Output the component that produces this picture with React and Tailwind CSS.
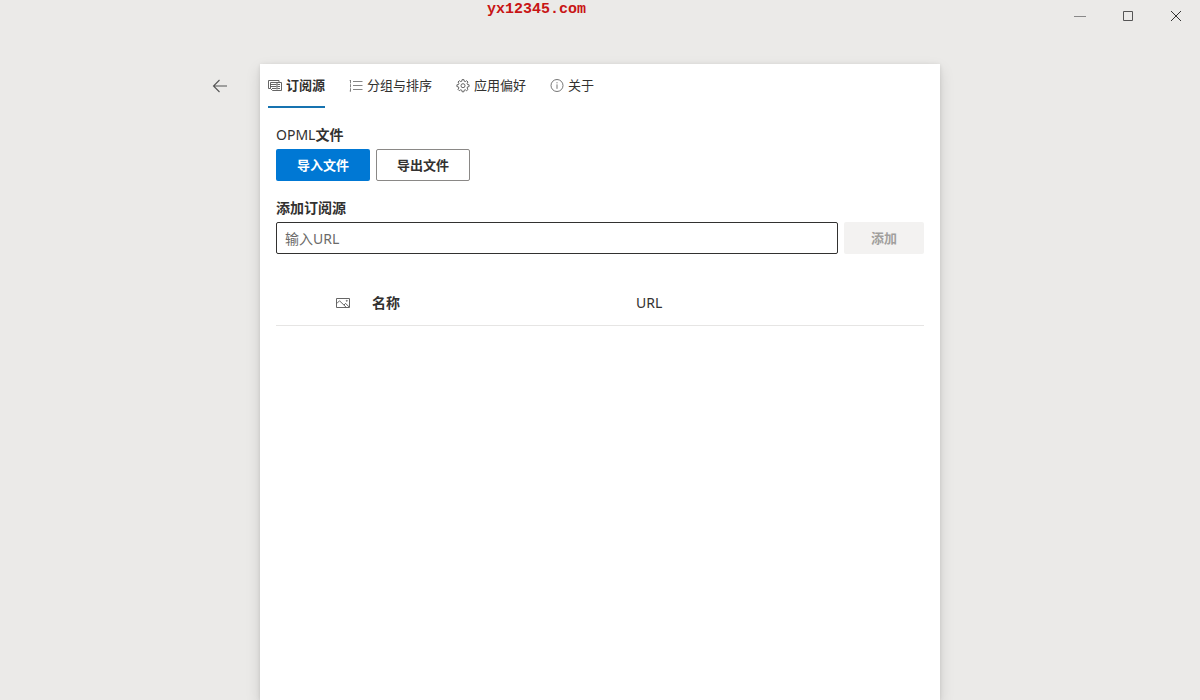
import React, { useState } from "react";

function ArrowLeftIcon() {
  return (
    <svg width="16" height="16" viewBox="0 0 16 16" fill="none" stroke="#555" strokeWidth="1.1" aria-hidden="true">
      <path d="M15 8H1.5M7.5 2L1.5 8l6 6" />
    </svg>
  );
}

function SourceIcon() {
  return (
    <svg width="14" height="14" viewBox="0 0 14 14" fill="none" stroke="#555" strokeWidth="0.9" aria-hidden="true">
      <path d="M2.5 9.5h-2v-8h10.5v2" />
      <path d="M2.5 3.5h11v8h-9l-2-2" />
      <path d="M2.5 3.5v6M2.5 5.5h6M2.5 7.5h6M4 9.5h4.5M9.5 5.5h2.5M9.5 7.5h2.5M9.5 9.5h2.5M9 3.5v7" />
    </svg>
  );
}

function GroupIcon() {
  return (
    <svg width="14" height="14" viewBox="0 0 14 14" fill="none" stroke="#777" strokeWidth="0.9" aria-hidden="true">
      <path d="M1.5 1v3.4M1.5 5.2v3.2M1.5 9.2v3.3M.7 1.5h.8M.7 12h1.2" />
      <path d="M4 2.5h9.5M4 6.5h9.5M4 10.5h9.5" />
    </svg>
  );
}

function SettingsIcon() {
  return (
    <svg width="14" height="14" viewBox="0 0 14 14" fill="none" stroke="#555" strokeWidth="0.9" strokeLinejoin="round" aria-hidden="true">
      <path d="M6.1 .6h1.8l.3 1.6 1.1.4 1.4-.9 1.3 1.3-.9 1.4.4 1.1 1.6.3v1.8l-1.6.3-.4 1.1.9 1.4-1.3 1.3-1.4-.9-1.1.4-.3 1.6H6.1l-.3-1.6-1.1-.4-1.4.9L2 10.4 2.9 9l-.4-1.1L.9 7.6V5.8l1.6-.3.4-1.1L2 3l1.3-1.3 1.4.9 1.1-.4z" />
      <circle cx="7" cy="6.7" r="2" />
    </svg>
  );
}

function InfoIcon() {
  return (
    <svg width="14" height="14" viewBox="0 0 14 14" fill="none" stroke="#666" strokeWidth="0.9" aria-hidden="true">
      <circle cx="7" cy="6.5" r="6" />
      <path d="M7 5.4v4.4M7 3.2v1.1" />
    </svg>
  );
}

function PictureIcon() {
  return (
    <svg width="14" height="14" viewBox="0 0 14 14" fill="none" stroke="#555" strokeWidth="0.9" role="img" aria-label="图标">
      <path d="M.5 2.5h13v9H.5z" />
      <path d="M.8 7.5L3.5 4.8l6.6 6.4M8 9l1.6-1.6 3.6 3.6" />
      <circle cx="10.8" cy="4.8" r=".5" />
    </svg>
  );
}

const tabs = [
  { name: "订阅源", Icon: SourceIcon },
  { name: "分组与排序", Icon: GroupIcon },
  { name: "应用偏好", Icon: SettingsIcon },
  { name: "关于", Icon: InfoIcon },
];

const windowControls = [
  { name: "最小化", path: "M0 6.5h12", color: "#888" },
  { name: "最大化", path: "M1.5 1.5h9v9h-9z", color: "#555" },
  { name: "关闭", path: "M1 1l10 10M11 1L1 11", color: "#333" },
];

export default function App() {
  const [active, setActive] = useState("订阅源");
  const [url, setUrl] = useState("");

  return (
    <div className="relative flex min-h-screen flex-col bg-[#ebeae8] font-['Noto_Sans','Noto_Sans_CJK_SC',sans-serif] text-[#323130]">
      <header className="flex h-8 justify-end">
        {windowControls.map((c) => (
          <button key={c.name} type="button" aria-label={c.name} className="flex w-12 items-center justify-center">
            <svg width="12" height="12" viewBox="0 0 12 12" fill="none" stroke={c.color} overflow="visible" aria-hidden="true">
              <path d={c.path} />
            </svg>
          </button>
        ))}
      </header>
      <span className="absolute top-0 left-[487px] font-['Liberation_Mono',monospace] text-[15px] leading-5 font-bold text-[#c81414]">
        yx12345.com
      </span>

      <div className="grid flex-1 grid-cols-[1fr_minmax(0,680px)_1fr] pt-8">
        <div className="flex items-start justify-end pr-5">
          <button type="button" aria-label="返回" className="flex h-11 w-10 items-center justify-center">
            <ArrowLeftIcon />
          </button>
        </div>

        <main className="bg-white shadow-[0_6px_14px_rgba(0,0,0,0.13),0_1px_4px_rgba(0,0,0,0.1)]">
          <nav className="flex h-11 gap-6 px-2">
            {tabs.map(({ name, Icon }) => (
              <button
                key={name}
                type="button"
                onClick={() => setActive(name)}
                className={
                  active === name
                    ? "flex items-center gap-1 border-b-2 border-[#1673b0] pt-0.5 text-[13px] font-semibold"
                    : "flex items-center gap-1 border-b-2 border-transparent pt-0.5 text-[13px]"
                }
              >
                <Icon />
                <span>{name}</span>
              </button>
            ))}
          </nav>

          <div className="px-4 pt-[13px]">
            <h2 className="py-1 text-sm leading-5 font-semibold">
              <span className="font-normal">OPML</span>文件
            </h2>
            <div className="flex gap-1.5 text-[13px] font-semibold">
              <button type="button" className="h-8 rounded-xs bg-[#0078d4] px-5 pt-0.5 text-white">
                <span className="px-px">导入文件</span>
              </button>
              <button type="button" className="h-8 rounded-xs border border-[#8a8886] px-5 pt-0.5">
                导出文件
              </button>
            </div>

            <form onSubmit={(e) => e.preventDefault()} className="pt-[13px]">
              <label htmlFor="source-url" className="block py-1 text-sm leading-5 font-semibold">
                添加订阅源
              </label>
              <div className="flex gap-1.5">
                <input
                  id="source-url"
                  type="text"
                  value={url}
                  onChange={(e) => setUrl(e.target.value)}
                  placeholder="输入URL"
                  className="h-8 min-w-0 flex-1 rounded-xs border border-[#323130] px-2 text-sm outline-none placeholder:text-[#6b6a69]"
                />
                <button
                  type="submit"
                  disabled={!url}
                  className="h-8 w-20 rounded-xs bg-[#f3f2f1] pt-0.5 text-[13px] font-semibold text-[#a19f9d]"
                >
                  添加
                </button>
              </div>
            </form>

            <table className="mt-[27px] w-full table-fixed text-left text-sm">
              <thead>
                <tr className="h-11 border-b border-[#e6e5e4]">
                  <td className="w-12" />
                  <th className="w-9 pl-3">
                    <PictureIcon />
                  </th>
                  <th className="w-66 pl-3 font-semibold">名称</th>
                  <th className="pl-3 font-normal">URL</th>
                </tr>
              </thead>
            </table>
          </div>
        </main>
        <div />
      </div>
    </div>
  );
}
